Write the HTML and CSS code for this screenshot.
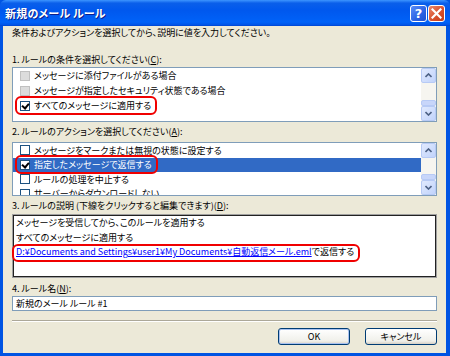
FILE: index.html
```html
<!DOCTYPE html>
<html>
<head>
    <title>新規のメール ルール</title>
    <link rel="stylesheet" href="styles.css">
</head>
<body>
<div class="window">
    <div class="titlebar">
        <span class="title">新規のメール ルール</span>
        <div class="tb-buttons">
            <span class="tb-btn help">?</span>
            <span class="tb-btn close">
                <svg width="11" height="11" viewBox="0 0 11 11"><path d="M1.5 1.5 L9.5 9.5 M9.5 1.5 L1.5 9.5" stroke="#fff" stroke-width="2.2" stroke-linecap="square"/></svg>
            </span>
        </div>
    </div>

    <div class="client">
        <p class="intro">条件およびアクションを選択してから、説明に値を入力してください。</p>

        <div class="label first">1. ルールの条件を選択してください(<u>C</u>):</div>
        <div class="listbox list1">
            <ul class="items">
                <li><span class="cb disabled"></span>メッセージに添付ファイルがある場合</li>
                <li><span class="cb disabled"></span>メッセージが指定したセキュリティ状態である場合</li>
                <li><span class="circled"><span class="cb checked"></span>すべてのメッセージに適用する</span></li>
            </ul>
            <div class="scrollbar">
                <span class="sb-btn"><svg width="7" height="5" viewBox="0 0 7 5"><path d="M0.5 4 L3.5 1 L6.5 4" fill="none" stroke="#4D6185" stroke-width="1.6"/></svg></span>
                <span class="sb-track"></span>
                <span class="sb-thumb"></span>
                <span class="sb-btn"><svg width="7" height="5" viewBox="0 0 7 5"><path d="M0.5 1 L3.5 4 L6.5 1" fill="none" stroke="#4D6185" stroke-width="1.6"/></svg></span>
            </div>
        </div>

        <div class="label">2. ルールのアクションを選択してください(<u>A</u>):</div>
        <div class="listbox list2">
            <ul class="items">
                <li><span class="cb"></span>メッセージをマークまたは無視の状態に設定する</li>
                <li class="selected"><span class="circled"><span class="cb checked"></span>指定したメッセージで返信する</span></li>
                <li><span class="cb"></span>ルールの処理を中止する</li>
                <li><span class="cb"></span>サーバーからダウンロードしない</li>
            </ul>
            <div class="scrollbar">
                <span class="sb-btn"><svg width="7" height="5" viewBox="0 0 7 5"><path d="M0.5 4 L3.5 1 L6.5 4" fill="none" stroke="#4D6185" stroke-width="1.6"/></svg></span>
                <span class="sb-track"></span>
                <span class="sb-thumb"></span>
                <span class="sb-btn"><svg width="7" height="5" viewBox="0 0 7 5"><path d="M0.5 1 L3.5 4 L6.5 1" fill="none" stroke="#4D6185" stroke-width="1.6"/></svg></span>
            </div>
        </div>

        <div class="label">3. ルールの説明 (下線をクリックすると編集できます)(<u>D</u>):</div>
        <div class="description">
            <div>メッセージを受信してから、このルールを適用する</div>
            <div>すべてのメッセージに適用する</div>
            <div><span class="circled wide"><a class="link">D:¥Documents and Settings¥user1¥My Documents¥自動返信メール.eml</a>で返信する</span></div>
        </div>

        <div class="label name">4. ルール名(<u>N</u>):</div>
        <div class="textbox">新規のメール ルール #1</div>

        <div class="separator"></div>

        <div class="actions">
            <button class="btn default">OK</button>
            <button class="btn">キャンセル</button>
        </div>
    </div>
</div>
</body>
</html>
```

FILE: styles.css
```css
body {
    margin: 0;
    font-family: "Noto Sans CJK JP", "Noto Sans", sans-serif;
    font-size: 9px;
    font-feature-settings: "palt";
    color: #000;
}
.window {
    width: 450px;
    height: 356px;
    display: flex;
    flex-direction: column;
    background: #0054E3;
}
.titlebar {
    height: 26px;
    display: flex;
    align-items: center;
    justify-content: space-between;
    padding: 0 5px 0 5px;
    background: linear-gradient(#3D95FF 0, #0A5FEA 12%, #0058EE 40%, #0062F8 85%, #0055E8 95%, #0043D0 100%);
    border-radius: 6px 6px 0 0;
}
.title {
    color: #fff;
    font-weight: bold;
    font-size: 11px;
    letter-spacing: 0.2px;
    text-shadow: 1px 1px 0 #0A1E8C;
}
.tb-buttons {
    display: flex;
    gap: 1px;
}
.tb-btn {
    width: 17px;
    height: 17px;
    box-sizing: border-box;
    border: 1px solid #fff;
    border-radius: 3px;
    display: flex;
    align-items: center;
    justify-content: center;
}
.help {
    background: linear-gradient(135deg, #5A8EF8, #2B62E4 60%, #1E4FD0);
    color: #fff;
    font-family: "DejaVu Sans", sans-serif;
    font-weight: bold;
    font-size: 13px;
}
.close {
    background: linear-gradient(135deg, #E98A6E, #D9512E 55%, #C23C18);
}
.client {
    flex: 1;
    background: #ECE9D8;
    margin: 0 4px 3px 3px;
    padding: 0 9px;
    display: flex;
    flex-direction: column;
}
.intro {
    margin: 0;
    line-height: 14px;
}
.label {
    line-height: 14px;
    margin-top: 3px;
}
.label.first {
    margin-top: 13px;
}
.label.name {
    margin-top: 5px;
}
u {
    text-decoration: underline;
}
.listbox {
    display: flex;
    background: #fff;
    border: 1px solid #7F9DB9;
    margin-top: 3px;
}
.list1 {
    height: 53px;
    margin-top: 0;
}
.list2 {
    height: 52px;
}
.items {
    list-style: none;
    margin: 0;
    padding: 0;
    flex: 1;
    overflow: hidden;
}
.items li {
    height: 15px;
    display: flex;
    align-items: center;
    padding-left: 7px;
    white-space: nowrap;
}
.list2 .items li {
    height: 14.5px;
}
.items li.selected {
    background: #316AC5;
    color: #fff;
}
.cb {
    width: 10px;
    height: 10px;
    box-sizing: border-box;
    border: 1px solid #1C5180;
    background: #fff;
    margin-right: 4px;
    flex: none;
    position: relative;
}
.cb.disabled {
    border-color: #C0C0C0;
    background: #DCDCDC;
}
.cb.checked::after {
    content: "";
    position: absolute;
    left: 2px;
    top: 0px;
    width: 3px;
    height: 5px;
    border: solid #000;
    border-width: 0 2px 2px 0;
    transform: rotate(40deg);
}
.circled {
    position: relative;
    display: inline-flex;
    align-items: center;
}
.circled::after {
    content: "";
    position: absolute;
    left: -5px;
    right: -6px;
    top: -3px;
    bottom: -3px;
    border: 2px solid #F00000;
    border-radius: 6px;
}
.scrollbar {
    width: 15px;
    display: flex;
    flex-direction: column;
    background: #F6F5F0;
}
.sb-btn {
    height: 15px;
    box-sizing: border-box;
    border: 1px solid #B7CAF5;
    border-radius: 2px;
    background: linear-gradient(135deg, #E1EAFE, #C1D3FB);
    display: flex;
    align-items: center;
    justify-content: center;
}
.sb-track {
    flex: 1;
}
.sb-thumb {
    height: 6px;
    box-sizing: border-box;
    border: 1px solid #B7CAF5;
    border-radius: 2px;
    background: #C8D6FA;
}
.description {
    height: 60px;
    background: #fff;
    border: 1px solid #222;
    box-shadow: 0 0 0 1px #A0A0A0;
    margin: 2px 1px 0;
    padding: 0 2px;
    line-height: 14.5px;
    white-space: nowrap;
}
.description .circled::after {
    left: -4px;
    right: -6px;
    top: -1px;
    bottom: -2px;
}
.link {
    color: #0000FF;
    text-decoration: underline;
}
.textbox {
    height: 15px;
    box-sizing: border-box;
    border: 1px solid #7F9DB9;
    background: #fff;
    line-height: 13px;
    padding-left: 3px;
}
.separator {
    margin-top: 9px;
    height: 1px;
    background: #ACA899;
    border-bottom: 1px solid #fff;
}
.actions {
    display: flex;
    justify-content: flex-end;
    gap: 15px;
    margin-top: 6px;
}
.btn {
    width: 72px;
    height: 17px;
    padding: 0;
    font-family: inherit;
    font-size: 9px;
    font-feature-settings: "palt";
    color: #000;
    border: 1px solid #003C74;
    border-radius: 3px;
    background: linear-gradient(#FFFFFF, #F0F0EA 80%, #D6D0C5);
}
.btn.default {
    box-shadow: inset 0 0 0 1px #A9C2F0;
}
```
